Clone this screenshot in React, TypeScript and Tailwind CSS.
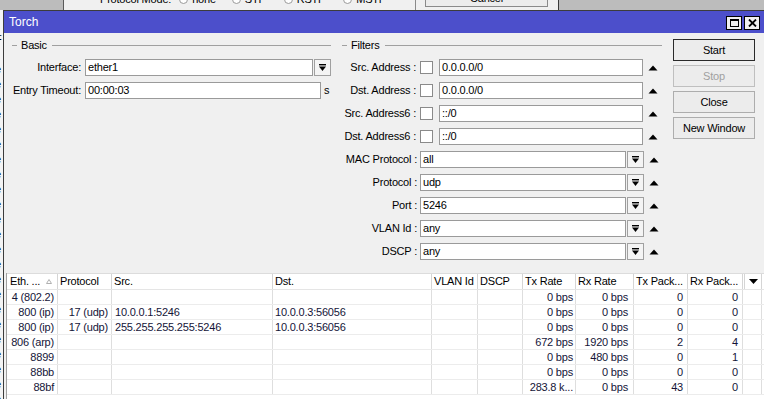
import React from "react";

const DropIcon = () => (
  <svg width="9" height="9" viewBox="0 0 9 9">
    <rect x="1" y="1" width="7" height="1.4" fill="#000" />
    <polygon points="1,3.6 8,3.6 4.5,8" fill="#000" />
  </svg>
);

const UpTri = () => (
  <svg width="10" height="6" viewBox="0 0 10 6">
    <polygon points="0.5,5.5 9.5,5.5 5,0.5" fill="#000" />
  </svg>
);

const DropBtn = () => (
  <div className="w-[17px] h-[17px] border border-[#a0a0a0] bg-[#f4f4f4] flex items-center justify-center shrink-0">
    <DropIcon />
  </div>
);

const Input = ({ value, w }: { value: string; w: string }) => (
  <div className={`${w} h-[17px] border border-[#9a9a9a] bg-white flex items-center pl-[2px] shrink-0 whitespace-nowrap overflow-hidden`}>
    {value}
  </div>
);

const GroupHeader = ({ title }: { title: string }) => (
  <div className="flex items-center h-[12px]">
    <div className="w-[5px] h-[1px] bg-[#a0a0a0]" />
    <div className="ml-[4px] mr-[5px] text-[11px]">{title}</div>
    <div className="flex-1 h-[1px] bg-[#a0a0a0]" />
  </div>
);

const addrRows = [
  ["Src. Address :", "0.0.0.0/0"],
  ["Dst. Address :", "0.0.0.0/0"],
  ["Src. Address6 :", "::/0"],
  ["Dst. Address6 :", "::/0"],
];

const comboRows = [
  ["MAC Protocol :", "all"],
  ["Protocol :", "udp"],
  ["Port :", "5246"],
  ["VLAN Id :", "any"],
  ["DSCP :", "any"],
];

type Col = { name: string; w: string; align: "l" | "r"; pad: string };
const cols: Col[] = [
  { name: "Eth. ...", w: "w-[51px]", align: "r", pad: "pr-[3px]" },
  { name: "Protocol", w: "w-[54px]", align: "r", pad: "pr-[3px]" },
  { name: "Src.", w: "w-[161px]", align: "l", pad: "pl-[3px]" },
  { name: "Dst.", w: "w-[159px]", align: "l", pad: "pl-[2px]" },
  { name: "VLAN Id", w: "w-[46px]", align: "r", pad: "pr-[3px]" },
  { name: "DSCP", w: "w-[45px]", align: "r", pad: "pr-[3px]" },
  { name: "Tx Rate", w: "w-[53px]", align: "r", pad: "pr-[2px]" },
  { name: "Rx Rate", w: "w-[58px]", align: "r", pad: "pr-[5px]" },
  { name: "Tx Pack...", w: "w-[54px]", align: "r", pad: "pr-[4px]" },
  { name: "Rx Pack...", w: "w-[55px]", align: "r", pad: "pr-[4px]" },
];

const rows: string[][] = [
  ["4 (802.2)", "", "", "", "", "", "0 bps", "0 bps", "0", "0"],
  ["800 (ip)", "17 (udp)", "10.0.0.1:5246", "10.0.0.3:56056", "", "", "0 bps", "0 bps", "0", "0"],
  ["800 (ip)", "17 (udp)", "255.255.255.255:5246", "10.0.0.3:56056", "", "", "0 bps", "0 bps", "0", "0"],
  ["806 (arp)", "", "", "", "", "", "672 bps", "1920 bps", "2", "4"],
  ["8899", "", "", "", "", "", "0 bps", "480 bps", "0", "1"],
  ["88bb", "", "", "", "", "", "0 bps", "0 bps", "0", "0"],
  ["88bf", "", "", "", "", "", "283.8 k...", "0 bps", "43", "0"],
];

const leftChars = ["F", "r", "e", "e", "e", "e", "e", "e", "e", "e", "e", "e", "e", "e", "e", "e", "e", "e", "e", "e", "e", "e", "e", "e", "e", "e"];

export default function App() {
  return (
    <div className="w-[764px] h-[399px] overflow-hidden flex flex-col bg-[#bcbcbc] font-['Liberation_Sans',Arial,sans-serif] text-[11px] tracking-[-0.2px] text-black leading-none">
      {/* background window strip */}
      <div className="h-[10px] flex shrink-0 overflow-hidden">
        <div className="w-[63px] bg-[#bcbcbc]" />
        <div className="w-[1px] bg-[#5a5a5a]" />
        <div className="w-[351px] bg-[#f0f0f0] overflow-hidden">
          <div className="flex items-center gap-[4px] mt-[-7px] ml-[36px] h-[13px] text-[11px] whitespace-nowrap">
            <span>Protocol Mode:</span>
            <span className="ml-[4px] w-[9px] h-[9px] rounded-full border border-[#9a9a9a] bg-white" />
            <span>none</span>
            <span className="ml-[12px] w-[9px] h-[9px] rounded-full border border-[#9a9a9a] bg-white" />
            <span>STP</span>
            <span className="ml-[14px] w-[9px] h-[9px] rounded-full border border-[#9a9a9a] bg-white" />
            <span>RSTP</span>
            <span className="ml-[14px] w-[9px] h-[9px] rounded-full border border-[#9a9a9a] bg-white" />
            <span>MSTP</span>
          </div>
        </div>
        <div className="w-[1px] bg-[#8a8a8a]" />
        <div className="w-[142px] bg-[#f0f0f0] overflow-hidden">
          <div className="ml-[9px] w-[123px] h-[20px] mt-[-13px] border border-[#8a8a8a] bg-[#ececec] flex items-end justify-center pb-[2px]">
            Cancel
          </div>
        </div>
        <div className="w-[1px] bg-[#3a3a3a]" />
        <div className="flex-1 bg-[#bcbcbc]" />
      </div>

      <div className="flex flex-1 min-h-0">
        {/* left sliver of background window */}
        <div className="w-[3px] bg-[#f4f4f4] overflow-hidden">
          <div className="ml-[-5px] pt-[22px] flex flex-col text-[11px] leading-[15px]">
            {leftChars.map((c, i) => (
              <span key={i}>{c}</span>
            ))}
          </div>
        </div>

        {/* Torch window */}
        <div className="flex-1 flex flex-col border-l border-t border-[#3c3c3c] bg-[#f0f0f0] min-w-0">
          {/* title bar */}
          <div className="h-[22px] bg-[#4c4fcb] flex items-center justify-between pl-[5px] pr-[4px] shrink-0">
            <span className="text-white text-[12px] tracking-normal">Torch</span>
            <div className="flex gap-[2px] mt-[1px]">
              <div className="w-[16px] h-[14px] border border-black bg-[#f0f0f0] flex items-center justify-center">
                <div className="w-[9px] h-[8px] border border-black border-t-2" />
              </div>
              <div className="w-[16px] h-[14px] border border-black bg-[#f0f0f0] flex items-center justify-center">
                <svg width="9" height="8" viewBox="0 0 9 8">
                  <path d="M1 0.5 L8 7.5 M8 0.5 L1 7.5" stroke="#000" strokeWidth="1.8" />
                </svg>
              </div>
            </div>
          </div>

          {/* body */}
          <div className="h-[240px] flex pt-[6px] shrink-0">
            {/* Basic */}
            <div className="ml-[8px] w-[319px] flex flex-col">
              <GroupHeader title="Basic" />
              <div className="mt-[8px] flex flex-col gap-[6px]">
                <div className="flex items-center h-[17px]">
                  <div className="w-[69px] text-right whitespace-nowrap">Interface:</div>
                  <div className="ml-[4px] flex gap-[1px]">
                    <Input value="ether1" w="w-[228px]" />
                    <DropBtn />
                  </div>
                </div>
                <div className="flex items-center h-[17px]">
                  <div className="w-[69px] text-right whitespace-nowrap flex justify-end">Entry Timeout:</div>
                  <div className="ml-[4px]">
                    <Input value="00:00:03" w="w-[236px]" />
                  </div>
                  <span className="ml-[3px]">s</span>
                </div>
              </div>
            </div>

            {/* Filters */}
            <div className="ml-[11px] w-[320px] flex flex-col">
              <GroupHeader title="Filters" />
              <div className="mt-[8px] flex flex-col gap-[6px]">
                {addrRows.map(([l, v]) => (
                  <div key={l} className="flex items-center h-[17px]">
                    <div className="w-[74px] whitespace-nowrap flex justify-end">{l}</div>
                    <div className="ml-[4px] w-[13px] h-[13px] border border-[#8a8a8a] bg-white shrink-0" />
                    <div className="ml-[6px]">
                      <Input value={v} w="w-[204px]" />
                    </div>
                    <div className="ml-[5px] flex items-center">
                      <UpTri />
                    </div>
                  </div>
                ))}
                {comboRows.map(([l, v]) => (
                  <div key={l} className="flex items-center h-[17px]">
                    <div className="w-[75px] whitespace-nowrap flex justify-end">{l}</div>
                    <div className="ml-[3px] flex gap-[1px]">
                      <Input value={v} w="w-[206px]" />
                      <DropBtn />
                    </div>
                    <div className="ml-[5px] flex items-center">
                      <UpTri />
                    </div>
                  </div>
                ))}
              </div>
            </div>

            {/* Buttons */}
            <div className="ml-[11px] w-[82px] flex flex-col gap-[4px]">
              <div className="h-[22px] border border-[#2a2a2a] bg-[#ececec] flex items-center justify-center">Start</div>
              <div className="h-[22px] border border-[#bfbfbf] bg-[#ececec] flex items-center justify-center text-[#a0a0a0]">Stop</div>
              <div className="h-[22px] border border-[#adadad] bg-[#ececec] flex items-center justify-center">Close</div>
              <div className="h-[22px] border border-[#adadad] bg-[#ececec] flex items-center justify-center">New Window</div>
            </div>
          </div>

          {/* table */}
          <div className="flex-1 ml-[2px] bg-white border-l border-[#a0a0a0] flex flex-col min-h-0">
            <div className="h-[17px] flex border-t border-[#dcdcdc] border-b border-b-[#e5e5e5] shrink-0">
              {cols.map((c, i) => (
                <div
                  key={c.name}
                  className={`${c.w} shrink-0 border-r border-[#d5d5d5] flex items-center whitespace-nowrap overflow-hidden ${i === 0 ? "pl-[3px]" : "pl-[2px]"}`}
                >
                  <span>{c.name}</span>
                  {i === 0 && (
                    <svg className="ml-[6px]" width="6" height="5" viewBox="0 0 6 5">
                      <polygon points="0.5,4.5 5.5,4.5 3,0.5" fill="none" stroke="#b0b0b0" strokeWidth="1" />
                    </svg>
                  )}
                </div>
              ))}
              <div className="w-[2px] shrink-0 border-r border-[#d5d5d5]" />
              <div className="w-[17px] shrink-0 border-r border-[#d5d5d5] flex items-center justify-center">
                <svg width="9" height="5" viewBox="0 0 9 5">
                  <polygon points="0,0 9,0 4.5,5" fill="#000" />
                </svg>
              </div>
            </div>
            {rows.map((r, ri) => (
              <div key={ri} className="h-[15px] flex border-b border-[#ececec] shrink-0 text-[#141438]">
                {cols.map((c, ci) => (
                  <div
                    key={ci}
                    className={`${c.w} shrink-0 border-r border-[#dedede] flex items-center whitespace-nowrap overflow-hidden ${c.align === "r" ? "justify-end" : "justify-start"} ${c.pad}`}
                  >
                    {r[ci]}
                  </div>
                ))}
                <div className="w-[19px] shrink-0 border-r border-[#dedede]" />
              </div>
            ))}
          </div>
        </div>
      </div>
    </div>
  );
}
